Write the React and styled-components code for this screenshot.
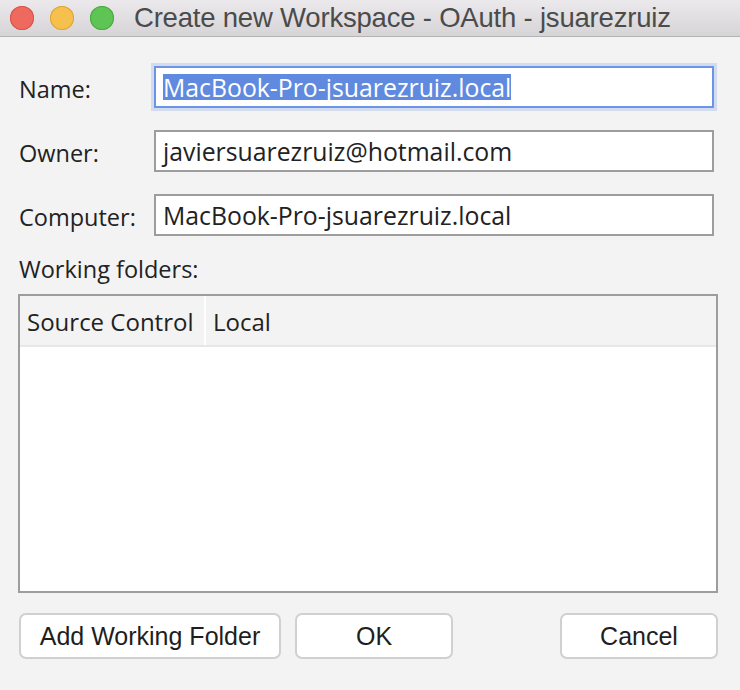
import styled, { createGlobalStyle } from "styled-components";

const GlobalStyle = createGlobalStyle`
    html, body {
        margin: 0;
        padding: 0;
        background: #f3f3f3;
    }
`;

const Window = styled.div`
    width: 740px;
    height: 690px;
    background: #f3f3f3;
    font-family: "Open Sans", "Noto Sans", sans-serif;
    color: #222;
    overflow: hidden;
`;

const TitleBar = styled.div`
    height: 36px;
    display: flex;
    align-items: center;
    background: linear-gradient(#ebe9eb, #d6d4d6);
    border-bottom: 1px solid #b4b4b4;
    padding-left: 10px;
`;

const Lights = styled.div`
    display: flex;
    gap: 16px;
    margin-right: 20px;
`;

const Light = styled.span`
    width: 24px;
    height: 24px;
    border-radius: 50%;
    background: ${props => props.color};
    box-shadow: inset 0 0 0 1px ${props => props.edge};
`;

const Title = styled.div`
    font-family: "Liberation Sans", Arial, sans-serif;
    font-size: 27.5px;
    color: #4b4b4b;
    letter-spacing: -0.2px;
    line-height: 36px;
`;

const Content = styled.div`
    padding: 29px 22px 0 19px;
`;

const Form = styled.div`
    display: grid;
    grid-template-columns: 135px 1fr;
    row-gap: 22px;
    align-items: center;
    padding-right: 4px;
`;

const Label = styled.label`
    font-size: 23.5px;
    line-height: 28px;
    padding-top: 4px;
`;

const Field = styled.div`
    height: 38px;
    display: flex;
    align-items: center;
    background: #fff;
    border: 2px solid ${props => props.focused ? "#6b95e6" : "#9d9d9d"};
    box-shadow: ${props => props.focused ? "0 0 0 3px #d3dcef" : "none"};
    padding-left: 7px;
    font-size: 24.8px;
    white-space: nowrap;
`;

const Selected = styled.span`
    background: #5f8ae0;
    color: #fff;
    line-height: 26px;
`;

const SectionLabel = styled.div`
    font-size: 23.5px;
    line-height: 28px;
    margin: 19px 0 11px;
`;

const Table = styled.div`
    height: 295px;
    margin-left: -1px;
    border: 2px solid #9d9d9d;
    background: #fff;
    display: flex;
    flex-direction: column;
`;

const HeaderRow = styled.div`
    height: 49px;
    display: flex;
    background: #f3f3f3;
    border-bottom: 2px solid #e7e7e7;
`;

const HeaderCell = styled.div`
    display: flex;
    align-items: center;
    padding-left: 7px;
    width: ${props => props.width || "auto"};
    flex: ${props => props.width ? "none" : "1"};
    border-right: ${props => props.width ? "2px solid #fff" : "none"};
    font-size: 24px;
    padding-top: 2px;
`;

const Buttons = styled.div`
    display: flex;
    gap: 14px;
    margin-top: 20px;
`;

const Button = styled.button`
    height: 46px;
    width: ${props => props.width}px;
    margin-left: ${props => props.push ? "auto" : "0"};
    background: #fff;
    border: 2px solid #d0d0d0;
    border-radius: 7px;
    font-family: "Liberation Sans", Arial, sans-serif;
    font-size: 25px;
    color: #1e1e1e;
    padding: 0;
`;

export default function App() {
    return (
        <Window>
            <GlobalStyle />
            <TitleBar>
                <Lights>
                    <Light color="#ee6a5f" edge="#d65247" />
                    <Light color="#f6c04f" edge="#dea236" />
                    <Light color="#5ec454" edge="#4aa83f" />
                </Lights>
                <Title>Create new Workspace - OAuth - jsuarezruiz</Title>
            </TitleBar>
            <Content>
                <Form>
                    <Label>Name:</Label>
                    <Field focused>
                        <Selected>MacBook-Pro-jsuarezruiz.local</Selected>
                    </Field>
                    <Label>Owner:</Label>
                    <Field>javiersuarezruiz@hotmail.com</Field>
                    <Label>Computer:</Label>
                    <Field>MacBook-Pro-jsuarezruiz.local</Field>
                </Form>
                <SectionLabel>Working folders:</SectionLabel>
                <Table>
                    <HeaderRow>
                        <HeaderCell width="177px">Source Control</HeaderCell>
                        <HeaderCell>Local</HeaderCell>
                    </HeaderRow>
                </Table>
                <Buttons>
                    <Button width={262}>Add Working Folder</Button>
                    <Button width={158}>OK</Button>
                    <Button width={158} push>Cancel</Button>
                </Buttons>
            </Content>
        </Window>
    );
}
